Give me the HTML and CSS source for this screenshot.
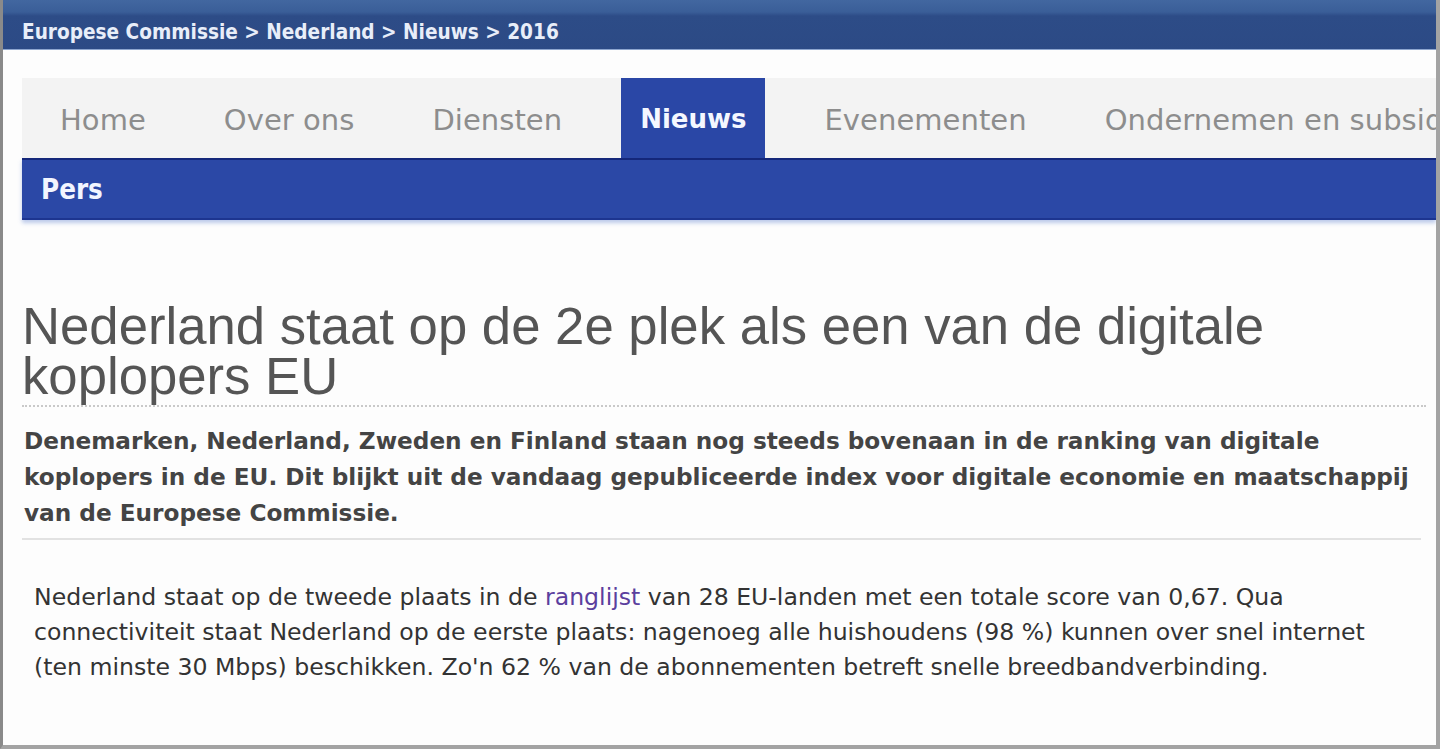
FILE: index.html
```html
<!DOCTYPE html>
<html lang="nl">
<head>
<meta charset="utf-8">
<title>Nederland staat op de 2e plek als een van de digitale koplopers EU</title>
<link rel="stylesheet" href="styles.css">
</head>
<body>
<div class="frame">
  <header class="topbar">
    <nav class="crumbs">Europese Commissie &gt; Nederland &gt; Nieuws &gt; 2016</nav>
  </header>
  <div class="content">
    <nav class="menu">
      <ul class="tabs">
        <li class="tab">Home</li>
        <li class="tab">Over ons</li>
        <li class="tab">Diensten</li>
        <li class="tab active">Nieuws</li>
        <li class="tab">Evenementen</li>
        <li class="tab">Ondernemen en subsidies</li>
      </ul>
      <div class="subnav">Pers</div>
    </nav>
    <article class="article">
      <h1 class="title">Nederland staat op de 2e plek als een van de digitale koplopers EU</h1>
      <p class="lead">Denemarken, Nederland, Zweden en Finland staan nog steeds bovenaan in de ranking van digitale<br>koplopers in de EU. Dit blijkt uit de vandaag gepubliceerde index voor digitale economie en maatschappij<br>van de Europese Commissie.</p>
      <p class="body">Nederland staat op de tweede plaats in de <a class="link" href="#">ranglijst</a> van 28 EU-landen met een totale score van 0,67. Qua<br>connectiviteit staat Nederland op de eerste plaats: nagenoeg alle huishoudens (98 %) kunnen over snel internet<br>(ten minste 30 Mbps) beschikken. Zo'n 62 % van de abonnementen betreft snelle breedbandverbinding.</p>
    </article>
  </div>
</div>
</body>
</html>
```

FILE: styles.css
```css
* {
  box-sizing: border-box;
}

html, body {
  margin: 0;
  padding: 0;
  background: #ffffff;
}

.frame {
  height: 749px;
  overflow: hidden;
  border-left: 3px solid #8a8a8a;
  border-right: 4px solid #a3a3a3;
  border-bottom: 4px solid #a3a3a3;
  background: #fdfdfd;
  display: flex;
  flex-direction: column;
}

.topbar {
  height: 50px;
  background: linear-gradient(to bottom, #4267a0 0px, #3a5e98 12px, #2d4c87 16px, #2c4a85 50px);
  display: flex;
  align-items: center;
  padding-left: 19px;
  border-bottom: 1px solid #8ea6cf;
}

.crumbs {
  font-family: "DejaVu Sans Condensed", "Liberation Sans", sans-serif;
  font-stretch: condensed;
  font-weight: bold;
  font-size: 20.6px;
  color: #e8eef9;
  padding-top: 15px;
}

.content {
  padding: 28px 0 0 19px;
}

.menu {
  display: flex;
  flex-direction: column;
}

.tabs {
  list-style: none;
  margin: 0;
  padding: 0 0 0 19px;
  height: 80px;
  background: #f3f3f3;
  display: flex;
  gap: 40px;
  white-space: nowrap;
  overflow: hidden;
  position: relative;
  z-index: 1;
}

.tab {
  padding: 4px 19px 0;
  display: flex;
  align-items: center;
  font-family: "DejaVu Sans", Verdana, sans-serif;
  font-size: 29px;
  letter-spacing: 0.05px;
  color: #8d8d8d;
}

.tab.active {
  background: #2a47a6;
  color: #f4f7ff;
  font-weight: bold;
  font-size: 26px;
  letter-spacing: 0;
  margin-top: -1px;
  height: 83px;
  padding: 0 19px 0;
}

.subnav {
  height: 62px;
  background: #2b48a6;
  border-top: 2px solid #14277a;
  border-bottom: 2px solid #1d3590;
  box-shadow: 0 3px 4px rgba(70, 110, 200, 0.35);
  display: flex;
  align-items: center;
  padding-left: 19px;
  font-family: "DejaVu Sans Condensed", "Liberation Sans", sans-serif;
  font-stretch: condensed;
  font-weight: bold;
  font-size: 27.5px;
  color: #f2f5ff;
}

.article {
  padding-right: 10px;
}

.title {
  margin: 81px 0 0 0;
  padding: 0 0 4px 0;
  font-family: "Liberation Sans", Arial, sans-serif;
  font-weight: normal;
  font-size: 52.7px;
  line-height: 50px;
  color: #555555;
  border-bottom: 2px dotted #c9c9c9;
}

.lead {
  margin: 16px 5px 0 0;
  padding: 0 0 7px 2px;
  font-family: "DejaVu Sans", Verdana, sans-serif;
  font-weight: bold;
  font-size: 23.2px;
  line-height: 36px;
  color: #444444;
  border-bottom: 2px solid #e2e2e2;
}

.body {
  margin: 40px 0 0 0;
  padding-left: 12px;
  font-family: "DejaVu Sans", Verdana, sans-serif;
  font-size: 23.6px;
  line-height: 35px;
  color: #333333;
}

.link {
  color: #5b3f9e;
  text-decoration: none;
}
```
